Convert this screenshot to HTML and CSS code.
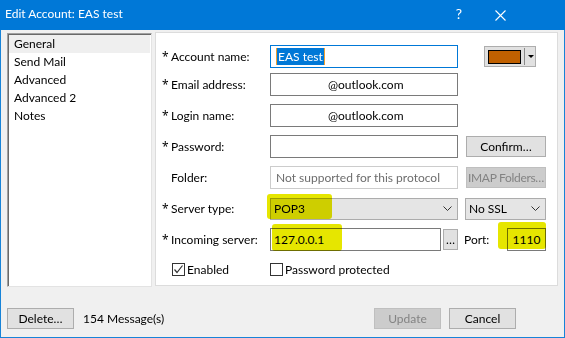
FILE: index.html
```html
<!DOCTYPE html>
<html lang="en">
<head>
  <meta charset="UTF-8" />
  <title>Edit Account</title>
  <link rel="stylesheet" href="styles.css">
</head>
<body>
  <div class="window">
    <div class="titlebar">
      <div class="title">Edit Account: EAS test</div>
      <div class="help">?</div>
      <div class="close">
        <svg width="11" height="11" viewBox="0 0 11 11"><path d="M0.5 0.5 L10.5 10.5 M10.5 0.5 L0.5 10.5" stroke="#fff" stroke-width="1.1" fill="none"/></svg>
      </div>
    </div>

    <div class="content">
      <div class="main">
        <div class="nav">
          <div class="nav-item selected">General</div>
          <div class="nav-item">Send Mail</div>
          <div class="nav-item">Advanced</div>
          <div class="nav-item">Advanced 2</div>
          <div class="nav-item">Notes</div>
        </div>

        <div class="panel">
          <div class="row first">
            <div class="label"><span class="req">*</span>Account name:</div>
            <div class="field focused"><span class="selection">EAS test</span></div>
            <div class="color-pick">
              <div class="swatch"></div>
              <div class="color-arrow"></div>
            </div>
          </div>
          <div class="row">
            <div class="label"><span class="req">*</span>Email address:</div>
            <div class="field email">@outlook.com</div>
          </div>
          <div class="row">
            <div class="label"><span class="req">*</span>Login name:</div>
            <div class="field email">@outlook.com</div>
          </div>
          <div class="row">
            <div class="label"><span class="req">*</span>Password:</div>
            <div class="field"></div>
            <div class="btn side">Confirm…</div>
          </div>
          <div class="row">
            <div class="label"><span class="req"></span>Folder:</div>
            <div class="field readonly">Not supported for this protocol</div>
            <div class="btn side disabled imap">IMAP Folders…</div>
          </div>
          <div class="row">
            <div class="label"><span class="req">*</span>Server type:</div>
            <div class="select">
              <span class="marker pop"></span>
              <span class="select-text">POP3</span>
              <svg class="chevron" width="9" height="5" viewBox="0 0 9 5"><path d="M0.5 0.5 L4.5 4.5 L8.5 0.5" stroke="#333" fill="none"/></svg>
            </div>
            <div class="select side">
              <span class="select-text">No SSL</span>
              <svg class="chevron" width="9" height="5" viewBox="0 0 9 5"><path d="M0.5 0.5 L4.5 4.5 L8.5 0.5" stroke="#333" fill="none"/></svg>
            </div>
          </div>
          <div class="row">
            <div class="label"><span class="req">*</span>Incoming server:</div>
            <div class="field server"><span class="marker ip"></span>127.0.0.1</div>
            <div class="btn dots">…</div>
            <div class="port-label">Port:</div>
            <div class="field port"><span class="marker port-mark"></span>1110</div>
          </div>
          <div class="row checks">
            <label class="check enabled">
              <span class="box"><svg width="11" height="11" viewBox="0 0 11 11"><path d="M1.5 5.5 L4 8.5 L9.5 1.5" stroke="#333" stroke-width="1.2" fill="none"/></svg></span>
              Enabled
            </label>
            <label class="check">
              <span class="box"></span>
              Password protected
            </label>
          </div>
        </div>
      </div>

      <div class="footer">
        <div class="btn foot">Delete…</div>
        <div class="count">154 Message(s)</div>
        <div class="spacer"></div>
        <div class="btn foot disabled">Update</div>
        <div class="btn foot">Cancel</div>
      </div>
    </div>
  </div>
</body>
</html>
```

FILE: styles.css
```css
body {
  margin: 0;
  padding: 0;
  font-family: 'Segoe UI', Lato, sans-serif;
  font-size: 12px;
  color: #000;
}
.window {
  width: 565px;
  height: 338px;
  box-sizing: border-box;
  background: #f0f0f0;
  border: 1px solid #1783d8;
  border-top: none;
  display: flex;
  flex-direction: column;
}
.titlebar {
  height: 30px;
  margin: 0 -1px;
  background: #0078d7;
  color: #fff;
  display: flex;
  align-items: flex-start;
  padding-top: 6px;
  box-sizing: border-box;
}
.title {
  margin-left: 5px;
  flex: 1;
  line-height: 16px;
}
.help {
  font-size: 14px;
  line-height: 16px;
  margin-right: 33px;
}
.close {
  margin-top: 3px;
  margin-right: 59px;
  height: 11px;
}
.content {
  flex: 1;
  display: flex;
  flex-direction: column;
  padding: 0 6px;
}
.main {
  display: flex;
  align-items: flex-start;
  gap: 3px;
  margin-top: 2px;
  height: 255px;
}
.nav {
  width: 145px;
  height: 254px;
  margin-top: 1px;
  box-sizing: border-box;
  background: #fff;
  border: 1px solid;
  border-color: #a0a0a0 #e3e3e3 #e3e3e3 #a0a0a0;
  box-shadow: inset 1px 1px 0 #696969;
  padding: 1px 1px 0 1px;
}
.nav-item {
  height: 18px;
  line-height: 18px;
  padding-left: 5px;
}
.nav-item.selected {
  background: #efefef;
}
.panel {
  flex: 1;
  height: 254px;
  box-sizing: border-box;
  background: #fff;
  border: 1px solid #dcdcdc;
  padding: 12px 0 0 6px;
  display: flex;
  flex-direction: column;
  gap: 8px;
}
.row {
  display: flex;
  align-items: center;
  height: 23px;
}
.row.first {
  margin-bottom: -3px;
}
.label {
  width: 108px;
  flex-shrink: 0;
}
.req {
  display: inline-block;
  width: 9px;
  font-family: 'Noto Sans', sans-serif;
  font-size: 12px;
}
.field {
  position: relative;
  width: 188px;
  height: 23px;
  box-sizing: border-box;
  border: 1px solid #7a7a7a;
  background: #fff;
  padding: 0 3px;
  line-height: 21px;
  white-space: nowrap;
}
.field.focused {
  border-color: #0078d7;
  padding-left: 5px;
}
.selection {
  display: inline-block;
  background: #0078d7;
  color: #fff;
  line-height: 17px;
  padding: 0 1px;
  border-left: 1px solid #f0a030;
  border-right: 1px solid #f0a030;
}
.field.email {
  padding-left: 57px;
}
.field.readonly {
  border-color: #cccccc;
  color: #6d6d6d;
  padding-left: 5px;
}
.color-pick {
  margin-left: 26px;
  width: 52px;
  height: 21px;
  box-sizing: border-box;
  border: 1px solid #adadad;
  background: #e1e1e1;
  display: flex;
  align-items: center;
  padding-left: 3px;
}
.swatch {
  width: 33px;
  height: 14px;
  box-sizing: border-box;
  border: 1px solid #000;
  background: #c06000;
}
.color-arrow {
  margin-left: 3px;
  height: 17px;
  border-left: 1px solid #8a8a8a;
  width: 10px;
  position: relative;
}
.color-arrow::after {
  content: "";
  position: absolute;
  left: 3px;
  top: 7px;
  border-left: 3px solid transparent;
  border-right: 3px solid transparent;
  border-top: 3px solid #000;
}
.btn {
  height: 21px;
  box-sizing: border-box;
  border: 1px solid #adadad;
  background: #e1e1e1;
  display: flex;
  align-items: center;
  justify-content: center;
  white-space: nowrap;
}
.btn.disabled {
  background: #cccccc;
  border-color: #bfbfbf;
  color: #838383;
}
.btn.imap {
  letter-spacing: -0.3px;
}
.side {
  margin-left: 8px;
  width: 80px;
}
.select {
  position: relative;
  width: 188px;
  height: 22px;
  box-sizing: border-box;
  border: 1px solid #acacac;
  background: #e5e5e5;
  display: flex;
  align-items: center;
  padding: 0 5px 0 3px;
}
.select.side {
  width: 81px;
  margin-left: 7px;
}
.select-text {
  flex: 1;
  position: relative;
}
.chevron {
  display: block;
}
.marker {
  position: absolute;
  background: #e6e600;
  mix-blend-mode: multiply;
  border-radius: 3px;
}
.marker.pop {
  left: -4px;
  top: -5px;
  width: 65px;
  height: 25px;
}
.marker.ip {
  left: 1px;
  top: -5px;
  width: 70px;
  height: 27px;
}
.marker.port-mark {
  left: -10px;
  top: -7px;
  width: 48px;
  height: 27px;
}
.field.server {
  width: 171px;
}
.dots {
  width: 15px;
  margin-left: 2px;
  height: 21px;
  align-self: flex-end;
  margin-bottom: 1px;
}
.port-label {
  margin-left: 6px;
  width: 43px;
}
.field.port {
  width: 39px;
  text-align: center;
}
.row.checks {
  height: 18px;
  margin-top: 1px;
}
.check {
  display: flex;
  align-items: center;
  gap: 2px;
}
.check.enabled {
  margin-left: 10px;
  width: 98px;
}
.box {
  width: 13px;
  height: 13px;
  box-sizing: border-box;
  border: 1px solid #333;
  background: #fff;
  display: flex;
  align-items: center;
  justify-content: center;
}
.footer {
  display: flex;
  align-items: center;
  margin-top: 21px;
  height: 21px;
}
.btn.foot {
  width: 67px;
}
.count {
  margin-left: 9px;
}
.spacer {
  flex: 1;
}
.btn.foot + .btn.foot {
  margin-left: 8px;
}
.footer .btn.foot:last-child {
  margin-right: 42px;
}
```
